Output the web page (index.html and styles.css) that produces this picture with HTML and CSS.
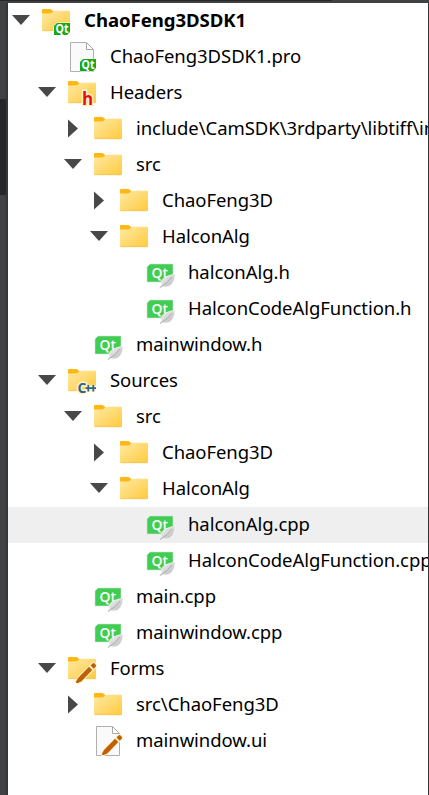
FILE: index.html
```html
<!DOCTYPE html>
<html lang="en">
<head>
    <meta charset="UTF-8">
    <meta name="viewport" content="width=device-width, initial-scale=1.0">
    <title>ChaoFeng3DSDK1</title>
    <link rel="stylesheet" href="styles.css">
</head>
<body>
    <svg class="defs" width="0" height="0">
        <defs>
            <linearGradient id="folderFill" x1="0" y1="0" x2="1" y2="1">
                <stop offset="0" stop-color="#ffe9a6"/>
                <stop offset="1" stop-color="#ffcb3d"/>
            </linearGradient>
            <linearGradient id="leafFill" x1="0" y1="0" x2="1" y2="1">
                <stop offset="0.200" stop-color="#ececec"/>
                <stop offset="1" stop-color="#b4b4b4"/>
            </linearGradient>
        </defs>
        <symbol id="down" viewBox="0 0 26 36"><path d="M4 12h18l-9 10z" fill="#484848"/></symbol>
        <symbol id="right" viewBox="0 0 26 36"><path d="M8 8.500v18l10-9z" fill="#484848"/></symbol>
        <symbol id="folder" viewBox="0 0 32 36">
            <path d="M2 12V7q0-1 1-1h7q1 0 2 1l1.500 1.500v3z" fill="#fdb813"/>
            <path d="M2 10.500h8q1 0 2-1l1.500-1q.7-.7 1.700-.7H29q1 0 1 1V27q0 1-1 1H3q-1 0-1-1z" fill="url(#folderFill)"/>
            <path d="M2.500 27.700h27" stroke="#f4bd45" stroke-width=".6"/>
        </symbol>
        <symbol id="page" viewBox="0 0 32 36">
            <path d="M4.500 3.500H20l7.500 7.500v21.500h-23z" fill="#fafafa" stroke="#b0b0b0"/>
            <path d="M20.500 3.500v7h7z" fill="#fff" stroke="#a8a8a8"/>
        </symbol>
        <symbol id="qtBadge" viewBox="0 0 32 36">
            <path d="M17 20h13v9l-3 3H14v-9z" fill="#17a81a" class="badge-shape"/>
            <text x="22" y="29.700" class="badge-text" textLength="13" lengthAdjust="spacingAndGlyphs">Qt</text>
        </symbol>
        <symbol id="pencil" viewBox="0 0 32 36">
            <path d="M10.500 32q-.8-.5-.4-1.500L12 27 23 15.800l3.300 3.300L15.500 30.200l-3.500 1.800z" fill="#c06000"/>
            <path d="M24.500 14.500l2-2q1-.8 2 0l1.200 1.300q.8 1 0 2l-2 2z" fill="#c06000"/>
        </symbol>
        <symbol id="source" viewBox="0 0 32 36">
            <path d="M6 9h23v14.500L25.500 27H3V12z" fill="#41cd52" stroke="#d7dfd8" stroke-width=".6"/>
            <text x="15.800" y="23" class="source-text" textLength="16.500" lengthAdjust="spacingAndGlyphs">Qt</text>
            <path d="M31 19q-.5 12-9 13-2.500 0-4-1l-1.500 2-.8-.8 1.600-2.200Q15 22 31 19z" fill="url(#leafFill)" stroke="#f6f6f6" stroke-width=".6"/>
            <path d="M16 32.500q8-4.500 12-10.500" fill="none" stroke="#9a9a9a" stroke-width=".7"/>
        </symbol>
        <symbol id="cpp" viewBox="0 0 32 36">
            <path d="M19.500 25.200H30M22.300 22v6.400M27.300 22v6.400" class="plus-halo"/>
            <text x="11.500" y="30" class="cpp-text">C</text>
            <path d="M19.500 25.200H30M22.300 22v6.400M27.300 22v6.400" class="plus"/>
        </symbol>
    </svg>
    <div class="topbar"><div class="topbar-dark"></div></div>
    <div class="window">
        <div class="rail"><div class="rail-dark"></div></div>
        <div class="tree">
            <div class="row level-0">
                <svg class="arrow"><use href="#down"/></svg>
                <svg class="icon"><use href="#folder"/><use href="#qtBadge"/></svg>
                <span class="label project">ChaoFeng3DSDK1</span>
            </div>
            <div class="row level-1">
                <span class="arrow"></span>
                <svg class="icon"><use href="#page"/><use href="#qtBadge"/></svg>
                <span class="label">ChaoFeng3DSDK1.pro</span>
            </div>
            <div class="row level-1">
                <svg class="arrow"><use href="#down"/></svg>
                <svg class="icon"><use href="#folder"/><text x="21.500" y="30" class="h-text">h</text></svg>
                <span class="label">Headers</span>
            </div>
            <div class="row level-2">
                <svg class="arrow"><use href="#right"/></svg>
                <svg class="icon"><use href="#folder"/></svg>
                <span class="label">include\CamSDK\3rdparty\libtiff\in</span>
            </div>
            <div class="row level-2">
                <svg class="arrow"><use href="#down"/></svg>
                <svg class="icon"><use href="#folder"/></svg>
                <span class="label">src</span>
            </div>
            <div class="row level-3">
                <svg class="arrow"><use href="#right"/></svg>
                <svg class="icon"><use href="#folder"/></svg>
                <span class="label">ChaoFeng3D</span>
            </div>
            <div class="row level-3">
                <svg class="arrow"><use href="#down"/></svg>
                <svg class="icon"><use href="#folder"/></svg>
                <span class="label">HalconAlg</span>
            </div>
            <div class="row level-4">
                <span class="arrow"></span>
                <svg class="icon"><use href="#source"/></svg>
                <span class="label">halconAlg.h</span>
            </div>
            <div class="row level-4">
                <span class="arrow"></span>
                <svg class="icon"><use href="#source"/></svg>
                <span class="label">HalconCodeAlgFunction.h</span>
            </div>
            <div class="row level-2">
                <span class="arrow"></span>
                <svg class="icon"><use href="#source"/></svg>
                <span class="label">mainwindow.h</span>
            </div>
            <div class="row level-1">
                <svg class="arrow"><use href="#down"/></svg>
                <svg class="icon"><use href="#folder"/><use href="#cpp"/></svg>
                <span class="label">Sources</span>
            </div>
            <div class="row level-2">
                <svg class="arrow"><use href="#down"/></svg>
                <svg class="icon"><use href="#folder"/></svg>
                <span class="label">src</span>
            </div>
            <div class="row level-3">
                <svg class="arrow"><use href="#right"/></svg>
                <svg class="icon"><use href="#folder"/></svg>
                <span class="label">ChaoFeng3D</span>
            </div>
            <div class="row level-3">
                <svg class="arrow"><use href="#down"/></svg>
                <svg class="icon"><use href="#folder"/></svg>
                <span class="label">HalconAlg</span>
            </div>
            <div class="row level-4 selected">
                <span class="arrow"></span>
                <svg class="icon"><use href="#source"/></svg>
                <span class="label">halconAlg.cpp</span>
            </div>
            <div class="row level-4">
                <span class="arrow"></span>
                <svg class="icon"><use href="#source"/></svg>
                <span class="label">HalconCodeAlgFunction.cpp</span>
            </div>
            <div class="row level-2">
                <span class="arrow"></span>
                <svg class="icon"><use href="#source"/></svg>
                <span class="label">main.cpp</span>
            </div>
            <div class="row level-2">
                <span class="arrow"></span>
                <svg class="icon"><use href="#source"/></svg>
                <span class="label">mainwindow.cpp</span>
            </div>
            <div class="row level-1">
                <svg class="arrow"><use href="#down"/></svg>
                <svg class="icon"><use href="#folder"/><use href="#pencil" class="pencil-halo"/><use href="#pencil"/></svg>
                <span class="label">Forms</span>
            </div>
            <div class="row level-2">
                <svg class="arrow"><use href="#right"/></svg>
                <svg class="icon"><use href="#folder"/></svg>
                <span class="label">src\ChaoFeng3D</span>
            </div>
            <div class="row level-2">
                <span class="arrow"></span>
                <svg class="icon"><use href="#page"/><use href="#pencil" class="pencil-halo"/><use href="#pencil"/></svg>
                <span class="label">mainwindow.ui</span>
            </div>
        </div>
    </div>
</body>
</html>
```
FILE: styles.css
```css
body {
    margin: 0;
    background-color: #404142;
    font-family: "Noto Sans", "Open Sans", sans-serif;
    overflow: hidden;
}
.defs {
    position: absolute;
}
.topbar {
    height: 3px;
    background-color: #404142;
}
.topbar-dark {
    width: 332px;
    height: 1px;
    background-color: #262728;
}
.window {
    display: flex;
    box-sizing: border-box;
    height: 792px;
    border-right: 1px solid #333435;
}
.rail {
    box-sizing: border-box;
    width: 8px;
    flex: none;
    padding-top: 96px;
    border-right: 2px solid #353637;
}
.rail-dark {
    height: 96px;
    background-color: #262728;
}
.tree {
    flex: 1;
    min-width: 0;
    overflow: hidden;
    background-color: #fff;
}
.row {
    display: flex;
    height: 36px;
    white-space: nowrap;
}
.level-1 {
    padding-left: 26px;
}
.level-2 {
    padding-left: 52px;
}
.level-3 {
    padding-left: 78px;
}
.level-4 {
    padding-left: 104px;
}
.selected {
    background-color: #efefef;
}
.arrow {
    flex: none;
    width: 26px;
    height: 36px;
    margin-right: 6px;
}
.icon {
    flex: none;
    width: 32px;
    height: 36px;
    margin-right: 12px;
}
.label {
    color: #000;
    font-size: 18.500px;
    line-height: 34px;
    letter-spacing: -0.060px;
}
.project {
    font-weight: bold;
    font-size: 18.600px;
}
.badge-shape {
    stroke: #fff;
    stroke-width: 1px;
    paint-order: stroke;
}
.badge-text,
.source-text {
    font-family: "Open Sans", sans-serif;
    font-weight: bold;
    fill: #fff;
    text-anchor: middle;
}
.badge-text {
    font-size: 11.500px;
}
.source-text {
    font-size: 15px;
    font-weight: 600;
}
.h-text {
    font: bold 17px "Open Sans", sans-serif;
    fill: #e01010;
    stroke: #fff0c8;
    stroke-width: 3px;
    paint-order: stroke;
    text-anchor: middle;
}
.cpp-text {
    font: bold 14px "Open Sans", sans-serif;
    fill: #2f6487;
    stroke: #fff3d2;
    stroke-width: 3px;
    paint-order: stroke;
}
.plus {
    fill: none;
    stroke: #2f6487;
    stroke-width: 1.800px;
}
.plus-halo {
    fill: none;
    stroke: #fff3d2;
    stroke-width: 4.500px;
}
.pencil-halo {
    stroke: #fff3d2;
    stroke-width: 2px;
}
```
